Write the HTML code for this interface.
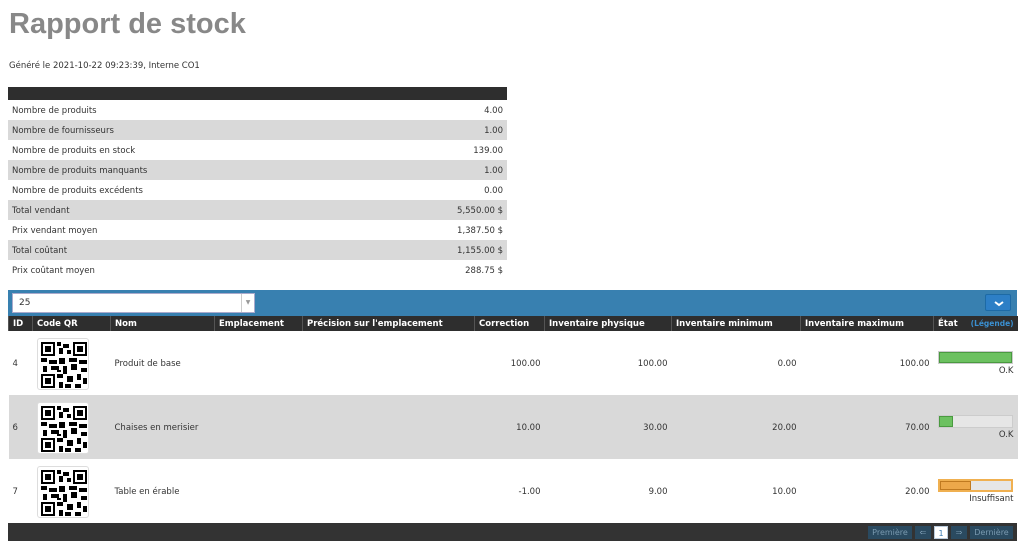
<!DOCTYPE html>
<html><head><meta charset="utf-8"><style>
*{box-sizing:border-box;margin:0;padding:0}
body{width:1024px;height:558px;background:#fff;font-family:"DejaVu Sans","Liberation Sans",sans-serif;font-size:8.5px;color:#333;position:relative;overflow:hidden}
h1{position:absolute;left:9px;top:8px;font-family:"Liberation Sans",sans-serif;font-size:29px;font-weight:bold;color:#888}
.gen{position:absolute;left:9px;top:61px;font-size:8.5px}
table{border-collapse:collapse;position:absolute}
#sum{left:8px;top:87px;width:499px}
#sum td{height:20px;padding:1px 4px 0}
#sum tr:nth-child(odd) td{background:#d9d9d9}
#sum td.r{text-align:right}
#sum th{height:13px;background:#2e2e2e}
.bar{position:absolute;left:8px;top:290px;width:1009px;height:26px;background:#3880b0}
.sel{position:absolute;left:12px;top:293px;width:243px;height:20px;background:#fff;border:1px solid #aac;font-size:9px;padding:4px 6px;color:#333}
.sel i{position:absolute;right:0;top:0;width:13px;height:18px;border-left:1px solid #ccc;font-style:normal;font-size:6px;color:#999;text-align:center;line-height:18px}
.btn{position:absolute;left:985px;top:294px;width:26px;height:17px;background:#2d7fc6;border-radius:2px;border:1px solid #1d6aa5}
#m{left:8px;top:316px;width:1009px;table-layout:fixed}
#m th{height:15px;background:#2e2e2e;color:#fff;font-weight:bold;text-align:left;padding:0 4px;font-size:8.5px;border-left:1px solid #555;white-space:nowrap}
#m td{height:64px;padding:1px 4px 0;vertical-align:middle}
#m tr.g td{background:#d9d9d9}
#m td.r{text-align:right}
.qr{width:52px;height:52px;background:#fff;border:1px solid #ddd;border-radius:3px;padding:3px}
.pb{width:75px;height:13px;background:#e6e6e6;border:1px solid #ccc;position:relative;margin-left:0}
.pb b{position:absolute;left:0;top:0;bottom:0}
.lbl{text-align:right;margin-top:2px}
.foot{position:absolute;left:8px;top:523px;width:1009px;height:18px;background:#333}
.pg{position:absolute;top:526px;height:13px;background:#2a4a60;color:#7a9ab0;font-size:8px;line-height:13px;text-align:center}
</style></head><body>
<h1>Rapport de stock</h1>
<div class="gen">Généré le 2021-10-22 09:23:39, Interne CO1</div>
<table id="sum">
<tr><th colspan="2"></th></tr>
<tr><td>Nombre de produits</td><td class="r">4.00</td></tr>
<tr><td>Nombre de fournisseurs</td><td class="r">1.00</td></tr>
<tr><td>Nombre de produits en stock</td><td class="r">139.00</td></tr>
<tr><td>Nombre de produits manquants</td><td class="r">1.00</td></tr>
<tr><td>Nombre de produits excédents</td><td class="r">0.00</td></tr>
<tr><td>Total vendant</td><td class="r">5,550.00 $</td></tr>
<tr><td>Prix vendant moyen</td><td class="r">1,387.50 $</td></tr>
<tr><td>Total coûtant</td><td class="r">1,155.00 $</td></tr>
<tr><td>Prix coûtant moyen</td><td class="r">288.75 $</td></tr>
</table>
<div class="bar"></div>
<div class="sel">25<i>▼</i></div>
<div class="btn"><svg width="26" height="17"><path d="M9 7l4 3 4-3" stroke="#fff" stroke-width="2" fill="none"/></svg></div>
<svg width="0" height="0" style="position:absolute"><defs><g id="q">
<rect x="0" y="0" width="14" height="14"/><rect x="2" y="2" width="10" height="10" fill="#fff"/><rect x="4" y="4" width="6" height="6"/>
<rect x="32" y="0" width="14" height="14"/><rect x="34" y="2" width="10" height="10" fill="#fff"/><rect x="36" y="4" width="6" height="6"/>
<rect x="0" y="32" width="14" height="14"/><rect x="2" y="34" width="10" height="10" fill="#fff"/><rect x="4" y="36" width="6" height="6"/>
<rect x="16" y="0" width="4" height="4"/><rect x="22" y="2" width="6" height="4"/><rect x="18" y="6" width="4" height="6"/><rect x="26" y="8" width="4" height="4"/>
<rect x="0" y="16" width="6" height="4"/><rect x="8" y="18" width="8" height="4"/><rect x="18" y="16" width="6" height="6"/><rect x="28" y="16" width="8" height="4"/><rect x="38" y="18" width="8" height="4"/>
<rect x="2" y="24" width="4" height="6"/><rect x="10" y="24" width="8" height="4"/><rect x="22" y="24" width="4" height="8"/><rect x="30" y="22" width="6" height="6"/><rect x="40" y="26" width="6" height="4"/>
<rect x="16" y="32" width="6" height="4"/><rect x="26" y="34" width="6" height="6"/><rect x="36" y="32" width="4" height="6"/><rect x="42" y="36" width="4" height="6"/>
<rect x="18" y="40" width="4" height="6"/><rect x="24" y="42" width="6" height="4"/><rect x="34" y="42" width="6" height="4"/><rect x="16" y="28" width="4" height="2"/>
</g></defs></svg>
<table id="m">
<colgroup><col style="width:24px"><col style="width:78px"><col style="width:104px"><col style="width:88px"><col style="width:172px"><col style="width:70px"><col style="width:127px"><col style="width:129px"><col style="width:133px"><col style="width:84px"></colgroup>
<tr><th>ID</th><th>Code QR</th><th>Nom</th><th>Emplacement</th><th>Précision sur l'emplacement</th><th>Correction</th><th>Inventaire physique</th><th>Inventaire minimum</th><th>Inventaire maximum</th><th>État <span style="color:#3a8fd0;font-size:7.5px;margin-left:10px">(Légende)</span></th></tr>
<tr><td>4</td><td><div class="qr"><svg width="46" height="46"><use href="#q"/></svg></div></td><td>Produit de base</td><td></td><td></td><td class="r">100.00</td><td class="r">100.00</td><td class="r">0.00</td><td class="r">100.00</td><td><div class="pb"><b style="width:100%;background:#6cc160;border:1px solid #4a9a40"></b></div><div class="lbl">O.K</div></td></tr>
<tr class="g"><td>6</td><td><div class="qr"><svg width="46" height="46"><use href="#q"/></svg></div></td><td>Chaises en merisier</td><td></td><td></td><td class="r">10.00</td><td class="r">30.00</td><td class="r">20.00</td><td class="r">70.00</td><td><div class="pb"><b style="width:20%;background:#6cc160;border:1px solid #4a9a40"></b></div><div class="lbl">O.K</div></td></tr>
<tr><td>7</td><td><div class="qr"><svg width="46" height="46"><use href="#q"/></svg></div></td><td>Table en érable</td><td></td><td></td><td class="r">-1.00</td><td class="r">9.00</td><td class="r">10.00</td><td class="r">20.00</td><td><div class="pb" style="border:2px solid #f0b050"><b style="width:45%;background:#eda84a;border:1px solid #c07a20"></b></div><div class="lbl">Insuffisant</div></td></tr>
</table>
<div class="foot"></div>
<div class="pg" style="left:868px;width:44px">Première</div>
<div class="pg" style="left:915px;width:16px">⇐</div>
<div class="pg" style="left:934px;width:14px;background:#fff;color:#3a7ab0;border:1px solid #bcd">1</div>
<div class="pg" style="left:951px;width:16px">⇒</div>
<div class="pg" style="left:970px;width:43px">Dernière</div>
</body></html>
